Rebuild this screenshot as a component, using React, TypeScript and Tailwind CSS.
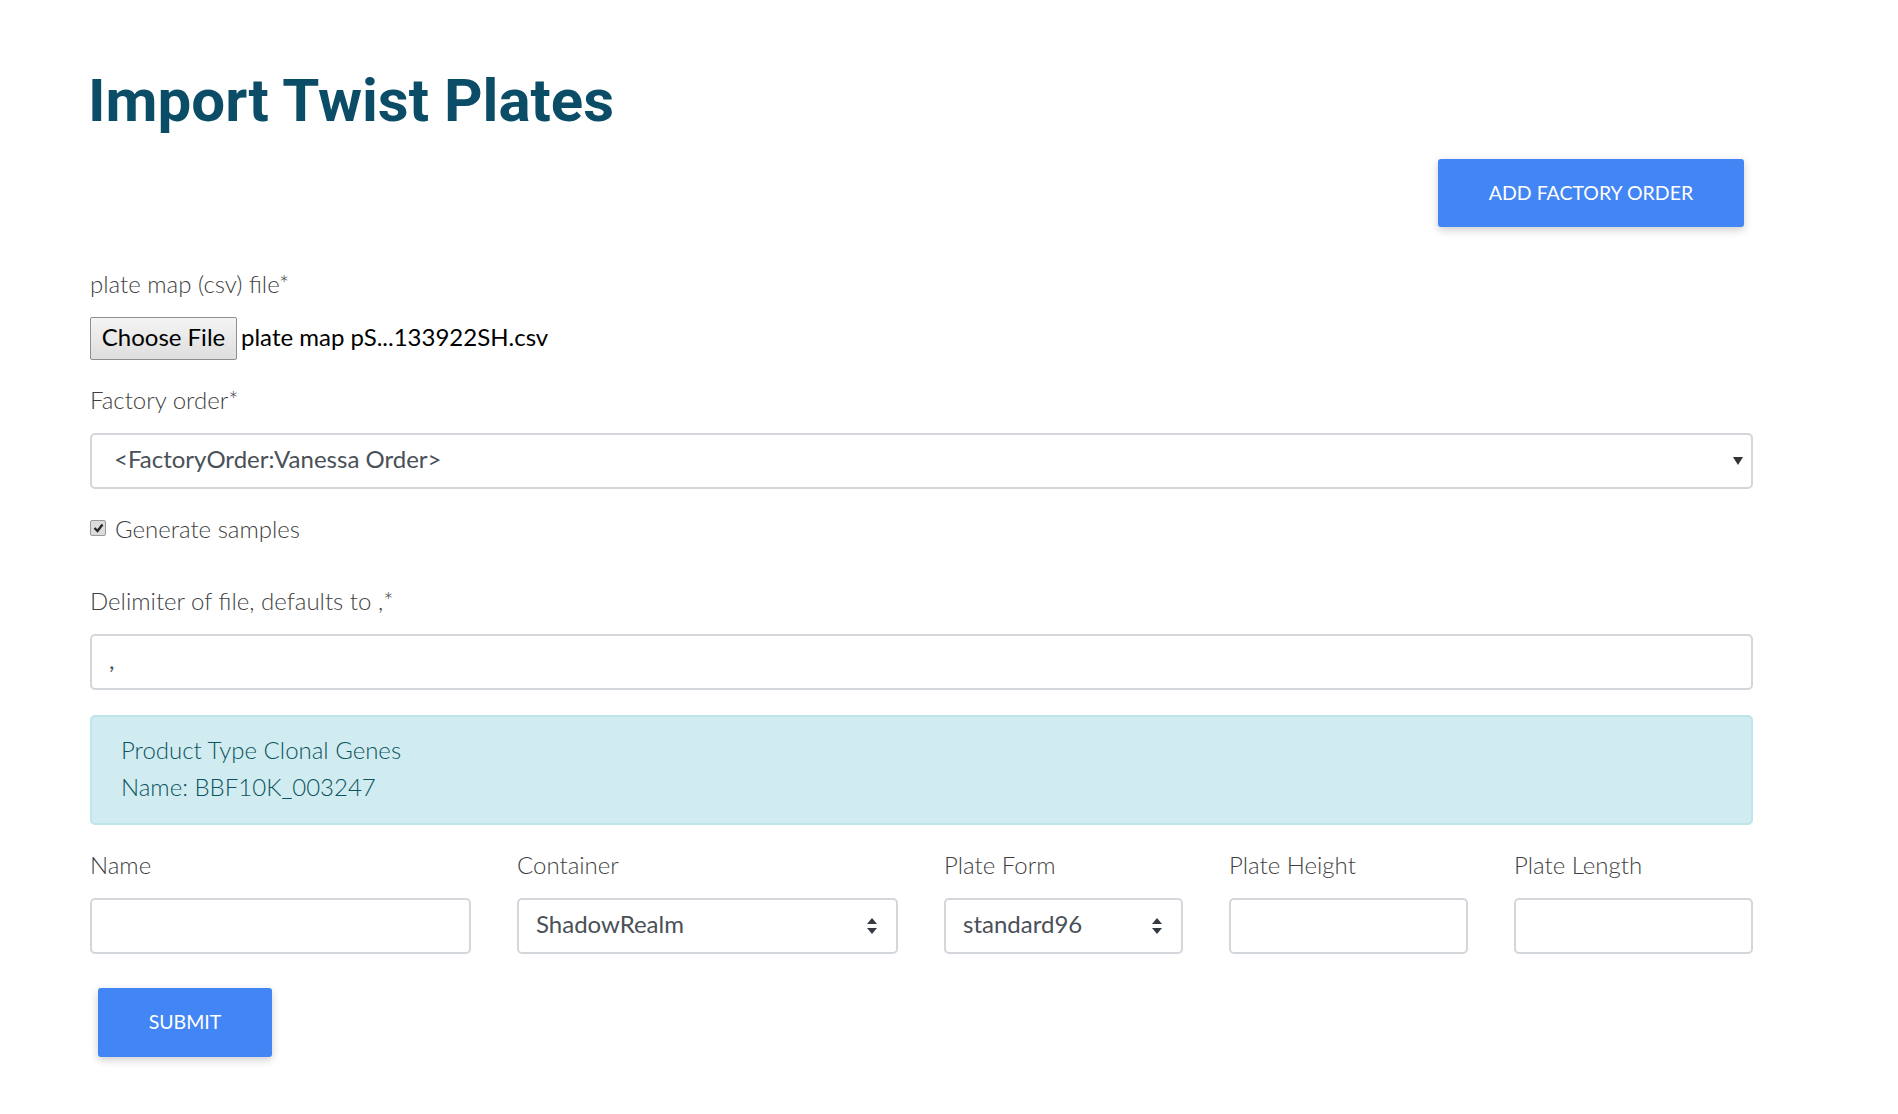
import React from "react";

const labelCls = "block text-[24px] leading-[33px] font-light text-[#3f3f3f]";
const boxCls =
  "h-[56px] w-full rounded-[5px] border-2 border-[#d3d7dc] bg-white text-[24px] text-[#495057]";

const UpDown = () => (
  <svg width="12" height="18" viewBox="0 0 12 18" className="shrink-0">
    <path d="M6 1 L11 7 H1 Z" fill="#343a40" />
    <path d="M6 17 L11 11 H1 Z" fill="#343a40" />
  </svg>
);

const Field = ({ label, children }: { label: string; children: React.ReactNode }) => (
  <div>
    <label className={labelCls}>{label}</label>
    <div className="mt-[17px]">{children}</div>
  </div>
);

export default function App() {
  return (
    <div className="min-h-screen bg-white font-['Lato',sans-serif]">
      <div className="w-[1663px] ml-[90px] pt-[65px] pb-10">
        <h1 className="font-['Roboto',sans-serif] font-bold text-[60px] leading-[72px] text-[#0b4d66] -ml-[2px]">
          Import Twist Plates
        </h1>

        <div className="flex justify-end mt-[22px] pr-[9px]">
          <button className="h-[68px] w-[306px] rounded-[3px] bg-[#4285f4] text-white text-[19.5px] uppercase shadow-[0_3px_8px_rgba(0,0,0,0.2)]">
            Add Factory Order
          </button>
        </div>

        <div className="mt-[40px]">
          <label className={labelCls}>plate map (csv) file*</label>
          <div className="mt-[17px] flex items-center">
            <button className="h-[43px] w-[147px] border border-[#8f8f8f] bg-gradient-to-b from-[#f4f4f4] to-[#dedede] pb-[3px] text-[24px] text-black rounded-[2px]">
              Choose File
            </button>
            <span className="ml-[4px] pb-[3px] text-[24px] text-black">plate map pS...133922SH.csv</span>
          </div>
        </div>

        <div className="mt-[23px]">
          <Field label="Factory order*">
            <div className={`${boxCls} flex items-center justify-between pl-[22px] pr-[8px]`}>
              <span className="pb-[4px]">&lt;FactoryOrder:Vanessa Order&gt;</span>
              <svg width="10" height="8" viewBox="0 0 10 8">
                <path d="M0 0 H10 L5 8 Z" fill="#333" />
              </svg>
            </div>
          </Field>
        </div>

        <div className="mt-[23px] flex items-center h-[33px] text-[24px] font-light text-[#3f3f3f]">
          <span className="flex h-[16px] w-[16px] items-center justify-center rounded-[2px] border border-[#9a9a9a] bg-[#dcdcdc] mb-[2px]">
            <svg width="11" height="10" viewBox="0 0 11 10">
              <path d="M1.5 5 L4.5 8 L9.5 1.5" fill="none" stroke="#222" strokeWidth="2.2" />
            </svg>
          </span>
          <span className="ml-[9px]">Generate samples</span>
        </div>

        <div className="mt-[39px]">
          <Field label="Delimiter of file, defaults to ,*">
            <div className={`${boxCls} flex items-center pl-[17px] pb-[4px]`}>,</div>
          </Field>
        </div>

        <div className="mt-[25px] h-[110px] rounded-[5px] border-2 border-[#bee5eb] bg-[#d1ecf1] px-[29px] pt-[15px] text-[24px] leading-[36.5px] font-light text-[#0c5460]">
          <div>Product Type Clonal Genes</div>
          <div>Name: BBF10K_003247</div>
        </div>

        <div className="mt-[23px] grid grid-cols-[381px_381px_239px_239px_239px] gap-x-[46px]">
          <Field label="Name">
            <div className={boxCls} />
          </Field>
          <Field label="Container">
            <div className={`${boxCls} flex items-center justify-between pl-[17px] pr-[18px]`}>
              <span className="pb-[4px]">ShadowRealm</span>
              <UpDown />
            </div>
          </Field>
          <Field label="Plate Form">
            <div className={`${boxCls} flex items-center justify-between pl-[17px] pr-[18px]`}>
              <span className="pb-[4px]">standard96</span>
              <UpDown />
            </div>
          </Field>
          <Field label="Plate Height">
            <div className={boxCls} />
          </Field>
          <Field label="Plate Length">
            <div className={boxCls} />
          </Field>
        </div>

        <div className="mt-[34px] pl-[8px]">
          <button className="h-[69px] w-[174px] rounded-[3px] bg-[#4285f4] pb-[2px] text-white text-[19.5px] uppercase shadow-[0_3px_8px_rgba(0,0,0,0.2)]">
            Submit
          </button>
        </div>
      </div>
    </div>
  );
}
